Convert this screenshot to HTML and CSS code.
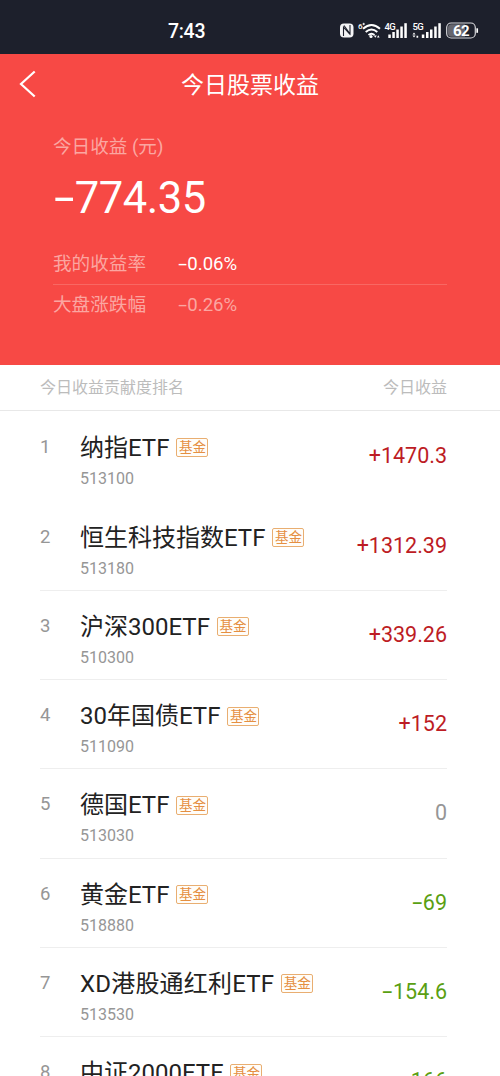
FILE: index.html
```
<!DOCTYPE html>
<html lang="zh-CN">
<head>
<meta charset="utf-8">
<title>今日股票收益</title>
<link rel="stylesheet" href="styles.css">
</head>
<body>
<div class="screen">
  <div class="status">
    <span class="clock">7:43</span>
    <svg class="indicators" width="144" height="20" viewBox="0 0 144 20">
      <rect x="1" y="3.500" width="13.500" height="14" rx="4" fill="#f4f4f6"/>
      <path d="M4.500 16V7.200l6.500 7.300M11 5v8.800L5 5.500" fill="none" stroke="#1d202c" stroke-width="1.100"/>
      <text x="19" y="8.500" class="tiny">6</text><path d="M23.500 4h2.400M24.700 2.800v2.400" stroke="#fff" stroke-width="0.900"/>
      <g fill="none" stroke="#fff" stroke-width="1.900">
        <path d="M24 8.800q8.500-7.600 17 0"/><path d="M26.700 12q5.800-5 11.600 0"/><path d="M29.500 15q3-2.600 6 0"/>
      </g>
      <circle cx="32" cy="16.500" r="1.600" fill="#fff"/><path d="M34.800 15.500l1.500 2.200 1.500-2.200zM38 17.500l1.300-2.200 1.300 2.200z" fill="#fff"/>
      <text x="45.500" y="10.200" class="net">4G</text>
      <g fill="#fff">
        <rect x="49.300" y="14.500" width="2.500" height="3.500"/><rect x="53.300" y="12" width="2.500" height="6"/><rect x="57.300" y="9.500" width="2.500" height="8.500"/><rect x="61.300" y="6.500" width="2.500" height="11.500"/><rect x="65.300" y="3.200" width="2.500" height="14.800"/>
      </g>
      <text x="73.500" y="10.200" class="net">5G</text>
      <g fill="#fff">
        <path d="M73.500 14.500l1.500-2 1.500 2zM73.500 15.500h3l-1.500 2zM77.500 15.800h1.700v2h-1.700z"/>
        <rect x="82.800" y="14.500" width="2.500" height="3.500"/><rect x="87" y="12" width="2.500" height="6"/><rect x="91" y="9.500" width="2.500" height="8.500"/><rect x="95.200" y="6.500" width="2.500" height="11.500"/><rect x="99.300" y="3.200" width="2.500" height="14.800"/>
      </g>
      <rect x="107.700" y="3" width="28.600" height="15" rx="4.500" fill="#1d202c" stroke="#d8d8dc" stroke-width="1.200"/>
      <path d="M112.500 4.300H126v12.500h-13.500a3.500 3.500 0 0 1-3.500-3.500V7.800a3.500 3.500 0 0 1 3.500-3.500z" fill="#66666e"/>
      <path d="M138.200 8.300v4.500" fill="none" stroke="#fff" stroke-width="1.700"/>
      <text x="122" y="15.500" class="charge">62</text>
    </svg>
  </div>
  <header class="hero">
    <div class="nav">
      <svg class="back" width="18" height="28" viewBox="0 0 18 28"><path d="M15.700 1.500L2 14l13.700 12.500" fill="none" stroke="#fff" stroke-width="2.200"/></svg>
      <h1>今日股票收益</h1>
    </div>
    <div class="summary">
      <div class="caption">今日收益 (元)</div>
      <div class="total"><span class="sign">-</span>774.35</div>
      <div class="rate mine"><span class="label">我的收益率</span><span><span class="sign">-</span>0.06%</span></div>
      <div class="rate"><span class="label">大盘涨跌幅</span><span><span class="sign">-</span>0.26%</span></div>
    </div>
  </header>
  <div class="heading"><span>今日收益贡献度排名</span><span>今日收益</span></div>
  <main class="list">
    <div class="row first"><span class="rank">1</span><div class="fund"><div class="title"><span class="name">纳指ETF</span><span class="tag">基金</span></div><div class="code">513100</div></div><span class="value up">+1470.3</span></div>
    <div class="row"><span class="rank">2</span><div class="fund"><div class="title"><span class="name">恒生科技指数ETF</span><span class="tag">基金</span></div><div class="code">513180</div></div><span class="value up">+1312.39</span></div>
    <div class="row"><span class="rank">3</span><div class="fund"><div class="title"><span class="name">沪深300ETF</span><span class="tag">基金</span></div><div class="code">510300</div></div><span class="value up">+339.26</span></div>
    <div class="row"><span class="rank">4</span><div class="fund"><div class="title"><span class="name">30年国债ETF</span><span class="tag">基金</span></div><div class="code">511090</div></div><span class="value up">+152</span></div>
    <div class="row"><span class="rank">5</span><div class="fund"><div class="title"><span class="name">德国ETF</span><span class="tag">基金</span></div><div class="code">513030</div></div><span class="value">0</span></div>
    <div class="row"><span class="rank">6</span><div class="fund"><div class="title"><span class="name">黄金ETF</span><span class="tag">基金</span></div><div class="code">518880</div></div><span class="value down"><span class="sign">-</span>69</span></div>
    <div class="row"><span class="rank">7</span><div class="fund"><div class="title"><span class="name wide">XD港股通红利ETF</span><span class="tag">基金</span></div><div class="code">513530</div></div><span class="value down"><span class="sign">-</span>154.6</span></div>
    <div class="row"><span class="rank">8</span><div class="fund"><div class="title"><span class="name">中证2000ETF</span><span class="tag">基金</span></div></div><span class="value down"><span class="sign">-</span>166</span></div>
  </main>
</div>
</body>
</html>
```
FILE: styles.css
```
* { box-sizing: border-box; }
body {
  margin: 0;
  background: #fff;
  font-family: Roboto, "Noto Sans CJK SC", sans-serif;
}
.screen { width: 500px; height: 1076px; overflow: hidden; }

.status {
  height: 54px;
  background: #1d202c;
  color: #fff;
  display: flex;
  justify-content: space-between;
  padding: 20px 17px 0 168px;
}
.clock { font-size: 19.5px; line-height: 24px; font-weight: 500; letter-spacing: -0.3px; }
.indicators { display: block; }
.tiny { font-size: 8px; font-weight: 500; fill: #fff; }
.net { font-size: 9.5px; font-weight: 500; letter-spacing: -0.6px; fill: #fff; }
.charge { font-size: 15px; font-weight: 700; letter-spacing: -0.5px; fill: #fff; text-anchor: middle; }

.hero { height: 310.5px; background: #f74945; color: #fff; }
.nav {
  height: 60px;
  display: grid;
  grid-template-columns: 50px 1fr 50px;
  align-items: center;
}
.back { display: block; margin-left: 19px; }
h1 { margin: 0; padding-top: 3px; text-align: center; font-size: 23px; line-height: 30px; font-weight: 400; }
.summary { padding: 21px 53px 0; }
.caption { height: 24px; line-height: 24px; font-size: 18.6px; color: #fba6a1; }
.total { height: 52px; margin-top: 12px; line-height: 56px; font-size: 43.5px; letter-spacing: -0.45px; }
.rate {
  height: 40px;
  line-height: 40px;
  display: grid;
  grid-template-columns: 125px 1fr;
  font-size: 18.6px;
  color: #fba6a1;
}
.mine { margin-top: 20px; color: #fff; height: 42px; line-height: 42px; border-bottom: 1px solid #f86863; }
.mine .label { color: #fba6a1; }
.sign { display: inline-block; width: 0.5em; text-align: center; transform: scaleX(1.7); }

.heading {
  height: 46px;
  padding: 0 53px 0 40px;
  border-bottom: 1px solid #e8e8e8;
  display: flex;
  justify-content: space-between;
  font-size: 16px;
  line-height: 45px;
  color: #bcbcbc;
}
.list { padding: 0 53px 0 40px; }
.row {
  height: 89.3px;
  padding-top: 21px;
  border-top: 1px solid #eeeeee;
  display: grid;
  grid-template-columns: 40px 1fr auto;
}
.row.first { height: 90px; border-color: transparent; }
.row:nth-child(2) { border-color: transparent; }
.rank { font-size: 18.5px; line-height: 29px; color: #969696; }
.title { height: 30px; display: flex; align-items: center; gap: 7px; }
.name { height: 30px; font-size: 24px; line-height: 30px; color: #222; }
.name.wide { letter-spacing: 0.2px; }
.tag {
  width: 32px;
  height: 19px;
  border: 1px solid #e9ae71;
  border-radius: 2px;
  background: #fffdf9;
  color: #e58f42;
  font-size: 13.5px;
  line-height: 17px;
  text-align: center;
}
.code { height: 20px; margin-top: 6px; font-size: 16px; line-height: 20px; color: #969696; }
.value { font-size: 21.5px; line-height: 46px; color: #969696; }
.up { color: #bd1c24; }
.down { color: #5a9f12; }
```
